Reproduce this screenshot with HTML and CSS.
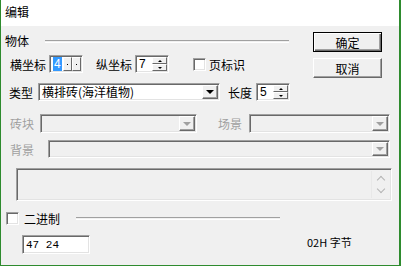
FILE: index.html
```html
<!DOCTYPE html>
<html lang="zh-CN">
<head>
    <meta charset="UTF-8">
    <title>编辑</title>
    <link rel="stylesheet" href="styles.css">
</head>
<body>
    <div class="window">
        <div class="titlebar">编辑</div>
        <div class="content">
            <div class="top">
                <div class="top-left">
                    <div class="group-head">
                        <span class="group-title">物体</span>
                        <i class="etched line-obj"></i>
                    </div>
                    <div class="row row-pos">
                        <span class="lbl">横坐标</span>
                        <div class="field spin spin-x">
                            <span class="val"><span class="sel">4</span></span>
                            <span class="hbtn"><b></b></span>
                            <span class="hbtn"><b></b></span>
                        </div>
                        <span class="lbl lbl-y">纵坐标</span>
                        <div class="field spin spin-y">
                            <span class="val">7</span>
                            <span class="vbtns"><span class="vbtn"><b class="up"></b></span><span class="vbtn"><b class="down"></b></span></span>
                        </div>
                        <span class="check check-page"></span>
                        <span class="lbl-check">页标识</span>
                    </div>
                </div>
                <div class="buttons">
                    <button class="btn btn-default">确定</button>
                    <button class="btn">取消</button>
                </div>
            </div>

            <div class="row row-type">
                <span class="lbl">类型</span>
                <div class="field combo combo-type">
                    <span class="val">横排砖(海洋植物)</span>
                    <span class="drop"><b></b></span>
                </div>
                <span class="lbl lbl-len">长度</span>
                <div class="field spin spin-len">
                    <span class="val">5</span>
                    <span class="vbtns"><span class="vbtn"><b class="up"></b></span><span class="vbtn"><b class="down"></b></span></span>
                </div>
            </div>

            <div class="row row-brick">
                <span class="lbl off">砖块</span>
                <div class="field combo disabled combo-brick">
                    <span class="val"></span>
                    <span class="drop"><b></b></span>
                </div>
                <span class="lbl off lbl-scene">场景</span>
                <div class="field combo disabled combo-scene">
                    <span class="val"></span>
                    <span class="drop"><b></b></span>
                </div>
            </div>

            <div class="row row-bg">
                <span class="lbl off">背景</span>
                <div class="field combo disabled combo-bg">
                    <span class="val"></span>
                    <span class="drop"><b></b></span>
                </div>
            </div>

            <div class="field memo">
                <div class="memo-text"></div>
                <div class="scroll">
                    <span class="chev chev-up"></span>
                    <span class="chev chev-down"></span>
                </div>
            </div>

            <div class="group-head bin-head">
                <span class="check check-bin"></span>
                <span class="bin-title">二进制</span>
                <i class="etched line-bin"></i>
            </div>

            <div class="row row-bin">
                <div class="field hex">47 24</div>
                <span class="size">02H 字节</span>
            </div>
        </div>
    </div>
</body>
</html>
```

FILE: styles.css
```css
body {
    margin: 0;
    background: #f0f0f0;
    font-family: "Noto Sans CJK SC", "Liberation Sans", sans-serif;
    font-size: 12px;
    color: #000;
}
.window {
    width: 401px;
    height: 266px;
    box-sizing: border-box;
    border: 1px solid #2e8b2e;
    border-top: none;
    border-right-width: 2px;
    background: #f0f0f0;
    overflow: hidden;
}
.titlebar {
    height: 26px;
    line-height: 24px;
    padding-left: 4px;
    background: #fff;
    font-size: 12px;
}
.top {
    display: flex;
    padding-top: 6px;
}
.top-left {
    width: 312px;
}
.group-head {
    display: flex;
    align-items: center;
    height: 18px;
}
.group-title {
    margin-left: 4px;
    line-height: 18px;
}
.etched {
    display: block;
    height: 1px;
    border-top: 1px solid #a0a0a0;
    border-bottom: 1px solid #fff;
}
.line-obj {
    margin-left: 16px;
    width: 244px;
}
.row {
    display: flex;
    align-items: center;
    height: 18px;
}
.row-pos {
    margin-top: 5px;
}
.lbl {
    margin-left: 9px;
    white-space: nowrap;
}
.lbl.off {
    color: #a0a0a0;
}
.field {
    box-sizing: border-box;
    height: 18px;
    display: flex;
    background: #fff;
    border: 1px solid;
    border-color: #a0a0a0 #fff #fff #a0a0a0;
    box-shadow: inset 1px 1px 0 #696969, inset -1px -1px 0 #e3e3e3;
}
.field .val {
    flex: 1;
    padding: 1px 0 0 3px;
    line-height: 14px;
    white-space: nowrap;
    font-family: "Liberation Sans", "Noto Sans CJK SC", sans-serif;
}
.combo-type .val {
    font-family: "Noto Sans CJK SC", sans-serif;
}
.sel {
    background: #3399ff;
    color: #fff;
    padding: 0 1px;
}
.spin {
    width: 34px;
    margin-left: 3px;
}
.hbtn {
    width: 7px;
    margin: 1px 0;
    background: #f0f0f0;
    border: 1px solid;
    border-color: #fff #696969 #696969 #fff;
    display: flex;
    align-items: center;
    justify-content: center;
}
.hbtn:last-child {
    margin-right: 1px;
}
.hbtn b {
    width: 1px;
    height: 1px;
    background: #000;
}
.vbtns {
    width: 15px;
    margin: 1px 1px 1px 0;
    display: flex;
    flex-direction: column;
}
.vbtn {
    flex: 1;
    box-sizing: border-box;
    background: #f0f0f0;
    border: 1px solid;
    border-color: #fff #696969 #696969 #fff;
    display: flex;
    align-items: center;
    justify-content: center;
}
.vbtn b {
    width: 0;
    height: 0;
    border-left: 2px solid transparent;
    border-right: 2px solid transparent;
}
.vbtn .up {
    border-bottom: 2px solid #000;
}
.vbtn .down {
    border-top: 2px solid #000;
}
.lbl-y {
    margin-left: 13px;
}
.check {
    box-sizing: border-box;
    width: 13px;
    height: 13px;
    background: #fff;
    border: 1px solid;
    border-color: #a0a0a0 #fff #fff #a0a0a0;
    box-shadow: inset 1px 1px 0 #696969, inset -1px -1px 0 #e3e3e3;
}
.check-page {
    margin-left: 24px;
}
.lbl-check {
    margin-left: 3px;
}
.buttons {
    display: flex;
    flex-direction: column;
    gap: 6px;
}
.btn {
    box-sizing: border-box;
    width: 69px;
    height: 20px;
    padding: 0;
    font: inherit;
    background: #f0f0f0;
    border: 1px solid;
    border-color: #fff #696969 #696969 #fff;
    box-shadow: inset -1px -1px 0 #a0a0a0;
}
.btn-default {
    border: 1px solid #000;
    box-shadow: inset 1px 1px 0 #fff, inset -1px -1px 0 #696969, inset -2px -2px 0 #a0a0a0;
}
.row-type {
    margin-top: 5px;
}
.row-type .lbl {
    margin-left: 8px;
}
.combo {
    margin-left: 5px;
}
.combo-type {
    width: 182px;
}
.drop {
    width: 16px;
    margin: 1px 1px 1px 0;
    box-sizing: border-box;
    background: #f0f0f0;
    border: 1px solid;
    border-color: #fff #696969 #696969 #fff;
    box-shadow: inset -1px -1px 0 #a0a0a0;
    display: flex;
    align-items: center;
    justify-content: center;
}
.drop b {
    width: 0;
    height: 0;
    border-left: 4px solid transparent;
    border-right: 4px solid transparent;
    border-top: 4px solid #000;
}
.combo.disabled {
    background: #f0f0f0;
}
.combo.disabled .drop b {
    border-top-color: #a0a0a0;
}
.lbl-len {
    margin-left: 14px;
}
.spin-len {
    margin-left: 4px;
}
.row-brick {
    margin-top: 13px;
    height: 19px;
}
.row-brick .field {
    height: 19px;
}
.combo-brick {
    margin-left: 6px;
    width: 157px;
}
.lbl-scene {
    margin-left: 21px;
}
.combo-scene {
    margin-left: 7px;
    width: 141px;
}
.row-bg {
    margin-top: 7px;
}
.combo-bg {
    margin-left: 14px;
    width: 342px;
}
.memo {
    margin: 10px 0 0 15px;
    width: 376px;
    height: 33px;
    background: #f0f0f0;
}
.memo-text {
    flex: 1;
}
.scroll {
    width: 17px;
    margin: 2px 2px 2px 0;
    border-left: 1px solid #e8e8e8;
    display: flex;
    flex-direction: column;
    align-items: center;
    justify-content: space-around;
}
.chev {
    width: 5px;
    height: 5px;
    border-left: 1px solid #b4b4b4;
    border-top: 1px solid #b4b4b4;
}
.chev-up {
    transform: translateY(2px) rotate(45deg);
}
.chev-down {
    transform: translateY(-2px) rotate(225deg);
}
.bin-head {
    margin-top: 9px;
    height: 16px;
}
.check-bin {
    margin-left: 5px;
}
.bin-title {
    margin-left: 5px;
}
.line-bin {
    margin-left: 16px;
    width: 204px;
}
.row-bin {
    margin-top: 9px;
    height: 19px;
    align-items: flex-start;
}
.hex {
    margin-left: 21px;
    width: 68px;
    height: 19px;
    padding: 2px 0 0 3px;
    font-family: "Liberation Mono", monospace;
    font-size: 11px;
    line-height: 14px;
}
.size {
    margin-left: 217px;
    line-height: 14px;
    font-size: 11px;
}
```
